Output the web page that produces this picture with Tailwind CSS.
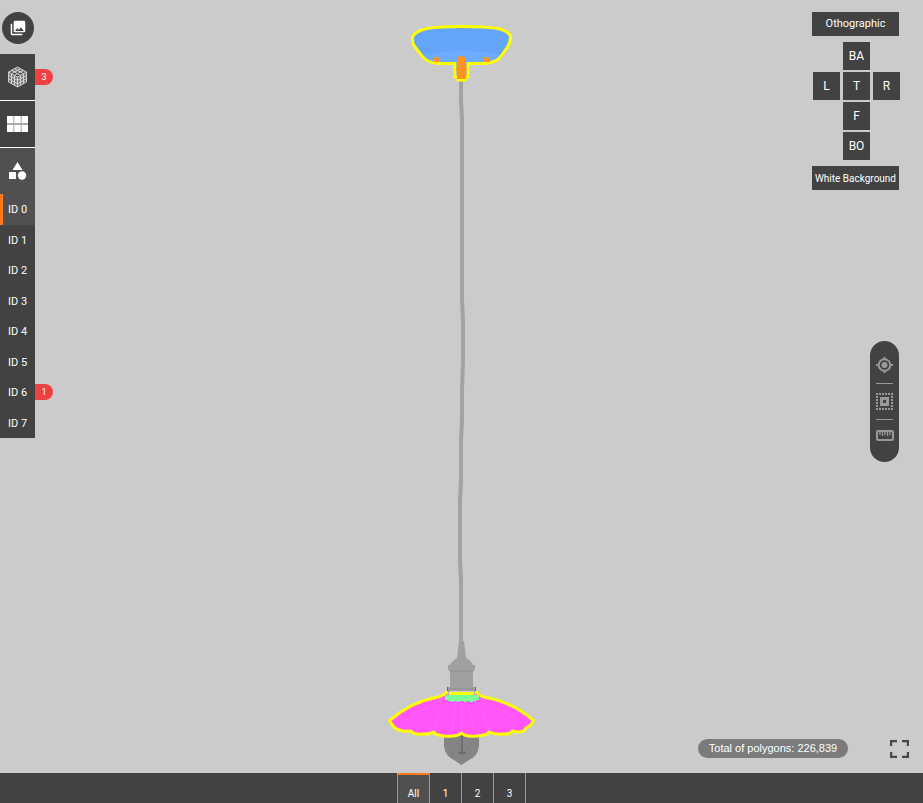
<!DOCTYPE html>
<html lang="en">
<head>
<meta charset="utf-8">
<title>Model viewer</title>
<script src="https://cdn.jsdelivr.net/npm/@tailwindcss/browser@4"></script>
</head>
<body class="flex h-screen flex-col overflow-hidden bg-[#cbcbcb] font-[Roboto,sans-serif] text-white">
<main class="relative min-h-0 flex-1">
  <svg class="mx-auto block h-full" viewBox="379 0 165 773" role="img" aria-label="Pendant lamp model">
    <!-- cord -->
    <path d="M461 80V100L462 120V300L463 320V360L462 390V420L461 440V480L460 500V560L461 580V645" fill="none" stroke="#a3a3a3" stroke-width="4"/>
    <!-- ceiling canopy -->
    <path d="M413 36Q416 31 427 29Q440 27 461 27Q485 27 498 29Q508 31 510 36Q511 42 507 48L501 56Q498 62 485 63H467V76H466V80H457V76H456V63H438Q426 62 422 56L415 47Q411 41 413 36Z" fill="#62a5fb"/>
    <path d="M423 55Q440 51 461 51Q484 51 500 55Q497 61 485 62H438Q427 61 423 55Z" fill="#6dacff"/>
    <path d="M413 36Q416 31 427 28.500Q440 26.500 461 26.500Q485 26.500 498 28.500Q508 31 510.500 36Q511 42 507 48L501 56Q498 62 485 63.500H468V77H465V80H458V77H455V63.500H438Q426 62 422 56L415 47Q411 41 413 36Z" fill="none" stroke="#ff0" stroke-width="3"/>
    <path d="M433 62V59Q433 57 436 57T440 59V62ZM483 62V59Q483 57 486 57T490 59V62ZM457 79V58Q458 56 461 56T466 58V79ZM456 68H467V70H456Z" fill="#ff9224"/>
    <!-- socket -->
    <path d="M459 641H464L466 658Q471 660 473 665H475V669L473 672V687H476V691H447V687H450V672L448 669V665H450Q453 660 457 658Z" fill="#a0a0a0"/>
    <path d="M450 671H473M449 689H474" stroke="#8b8b8b" fill="none"/>
    <path d="M447.500 687V691L450 693M475.500 687V691L473 693" fill="none" stroke="#666"/>
    <!-- bulb -->
    <path d="M444 733H479V746Q478 756 469 760L461.500 765L454 760Q445 756 444 746Z" fill="#858585"/>
    <path d="M462 734V754M458 753H466" fill="none" stroke="#676767" stroke-width="1.500"/>
    <path d="M457 743h1M459 745h1M454 748h1M467 748h1M452 753h1M470 751h1" stroke="#666" fill="none"/>
    <!-- shade -->
    <path d="M445 694Q443 696 436 697Q411 702 390 720Q392 728 399 730Q407 732 411 731Q416 735 434 732Q440 738 459 735L461 733L465 736Q483 737 489 731Q499 736 512 732Q524 733 526 728Q532 726 533 720Q512 702 486 697Q480 696 477 694Z" fill="#ff55f9"/>
    <path d="M444 699Q421 708 401 725M449 701Q439 714 434 730M456 701L452 733M461.500 702V732M468 701L474 733M474 701Q484 714 489 730M480 699Q502 708 521 724" stroke="#ff65fa" fill="none"/>
    <!-- shade outline, with the collar over it -->
    <path d="M447 691Q445 696 436 697.500Q411 702 389.500 720.500Q393 728 399 730Q405 732 411 731Q413 735 424 734Q431 734 433.500 732Q435 735 444 736Q458 737 461.500 733Q465 737 477 736Q488 735 489 732Q495 735 504 734Q511 734 512 731Q523 734 526 728Q532 725 533.500 720.500Q512 702 486 697.500Q478 696 476 691M449 693.500H474" fill="none" stroke="#ff0" stroke-width="3" stroke-linejoin="round"/>
    <path d="M446 695H477L479 697V700H476V701H473V702H470V701H467V702H464V701H460V702H457V701H454V702H451V701H448V700H445V697Z" fill="#7cff94"/>
  </svg>

  <nav class="absolute top-3 left-0 flex w-[35px] flex-col" aria-label="Scene">
    <button aria-label="Images" class="mb-2.5 ml-0.5 flex size-8 items-center justify-center rounded-full bg-[#424242]">
      <svg class="size-4" viewBox="1 1 22 22" fill="#fff"><path d="M22 16V4a2 2 0 0 0-2-2H8a2 2 0 0 0-2 2v12a2 2 0 0 0 2 2h12a2 2 0 0 0 2-2zM11 12l2.030 2.710L16 11l4 5H8zM2 6v14a2 2 0 0 0 2 2h14v-2H4V6z"/></svg>
    </button>
    <button aria-label="Polygons, 3 warnings" class="relative flex h-[47px] items-center justify-center border-b border-white bg-[#424242]">
      <svg class="h-[22px] w-[21px]" viewBox="0 0 20 22" fill="none" stroke="#d2d2d2">
        <path d="M10 1L19 6V16L10 21L1 16V6ZM1 6L10 11L19 6M10 11V21" fill="#777"/>
        <path d="M4 4.300L13 9.300V19.300M7 2.700L16 7.700V17.700M13 2.700L4 7.700V17.700M16 4.300L7 9.300V19.300M1 9.300L10 14.300L19 9.300M1 12.700L10 17.700L19 12.700"/>
      </svg>
      <span class="absolute top-[15px] left-full flex h-4 w-[18px] items-center justify-center rounded-r-full bg-[#ee4040] pt-px text-[9px]">3</span>
    </button>
    <button aria-label="Grid" class="flex h-[47px] items-center justify-center border-b border-white bg-[#424242]">
      <svg class="h-4 w-[21px]" viewBox="0 0 20 16" preserveAspectRatio="none"><path d="M0 0H20V16H0Z" fill="#aaa"/><path d="M0 0H6V7H0ZM7 0H13V7H7ZM14 0H20V7H14ZM0 9H6V16H0ZM7 9H13V16H7ZM14 9H20V16H14Z" fill="#fff"/></svg>
    </button>
    <button aria-label="Shapes" class="flex h-[46px] items-center justify-center bg-[#505050]">
      <svg class="h-[18px] w-[19px]" viewBox="0 0 19 18" fill="#fff"><path d="M9.500 0L14.500 8H4.500ZM1 10H8V17H1Z"/><circle cx="14" cy="13.500" r="4.200"/></svg>
    </button>
    <div class="flex h-[244px] flex-col text-[11px]">
      <button class="flex-1 border-l-3 border-[#ff7a1a] bg-[#505050] pt-0.5 pr-[3px]">ID 0</button>
      <button class="flex-1 bg-[#424242] pt-0.5">ID 1</button>
      <button class="flex-1 bg-[#424242] pt-0.5">ID 2</button>
      <button class="flex-1 bg-[#424242] pt-0.5">ID 3</button>
      <button class="flex-1 bg-[#424242] pt-0.5">ID 4</button>
      <button class="flex-1 bg-[#424242] pt-0.5">ID 5</button>
      <button class="relative flex-1 bg-[#424242] pt-0.5">ID 6<span class="absolute top-[7px] left-full flex h-4 w-[18px] items-center justify-center rounded-r-full bg-[#ee4040] pt-px text-[9px]">1</span></button>
      <button class="flex-1 bg-[#424242] pt-0.5">ID 7</button>
    </div>
  </nav>

  <section class="absolute top-3 right-6 flex w-[87px] flex-col gap-1.5" aria-label="Camera">
    <button class="h-6 bg-[#424242] pt-px text-[11px]">Othographic</button>
    <div class="ml-px grid grid-cols-[repeat(3,27px)] auto-rows-[28px] gap-x-[3px] gap-y-0.5 text-xs">
      <button class="col-start-2 bg-[#424242]">BA</button>
      <button class="col-start-1 bg-[#424242]">L</button>
      <button class="bg-[#424242]">T</button>
      <button class="bg-[#424242]">R</button>
      <button class="col-start-2 bg-[#424242]">F</button>
      <button class="col-start-2 bg-[#424242]">BO</button>
    </div>
    <button class="h-6 bg-[#424242] text-[10px] whitespace-nowrap">White Background</button>
  </section>

  <div class="absolute right-6 bottom-[311px] flex h-[121px] w-[29px] flex-col items-center rounded-full bg-[#424242] pt-4" role="toolbar" aria-label="Tools">
    <button aria-label="Center" class="h-4"><svg class="h-4 w-[17px]" viewBox="0 0 17 16" fill="none" stroke="#999"><circle cx="8.500" cy="8" r="5.800" stroke-width="2"/><circle cx="8.500" cy="8" r="3" fill="#999" stroke="none"/><path d="M8.500 0V2M8.500 14V16M0 8H2.500M14.500 8H17" stroke-width="2"/></svg></button>
    <span class="mt-2.5 h-px w-[17px] bg-[#999]"></span>
    <button aria-label="Select region" class="mt-[9px] h-[17px]"><svg class="size-[17px]" viewBox="0 0 17 17" fill="none" stroke="#999"><path d="M0 1H17M0 16H17M1 0V17M16 0V17" stroke-width="2" stroke-dasharray="2 1"/><path d="M5.500 5.500H11.500V11.500H5.500Z" stroke-width="3"/></svg></button>
    <span class="mt-[9px] h-px w-[17px] bg-[#999]"></span>
    <button aria-label="Measure" class="mt-2.5 h-3"><svg class="h-3 w-[18px]" viewBox="0 0 18 12" fill="none" stroke="#999"><rect x="1" y="1" width="16" height="9" rx="1" stroke-width="2"/><path d="M4 2V5M6.500 2V6M9 2V5M11.500 2V6M14 2V5" stroke-width="1.300"/></svg></button>
  </div>

  <div class="absolute right-[14px] bottom-[15px] flex items-center gap-[42px]">
    <p class="flex h-[19px] w-[150px] items-center justify-center rounded-full bg-[#7b7b7b] font-['Liberation_Sans',sans-serif] text-[11px] whitespace-nowrap">Total of polygons: 226,839</p>
    <button aria-label="Fullscreen"><svg class="block h-[18px] w-[19px]" viewBox="0 0 19 18" fill="none" stroke="#484848" stroke-width="2.200"><path d="M1.100 6V1.100H7M12 1.100H17.900V6M17.900 12V16.900H12M7 16.900H1.100V12"/></svg></button>
  </div>
</main>
<footer class="flex h-[30px] shrink-0 justify-center bg-[#424242] text-[10px]">
  <div class="flex border-l border-[#999]">
    <button class="w-8 border-t-2 border-r border-t-[#ff7a1a] border-r-[#999] bg-[#505050] pt-2">All</button>
    <button class="w-8 border-r border-[#999] pt-2.5">1</button>
    <button class="w-8 border-r border-[#999] pt-2.5">2</button>
    <button class="w-8 border-r border-[#999] pt-2.5">3</button>
  </div>
</footer>
</body>
</html>
